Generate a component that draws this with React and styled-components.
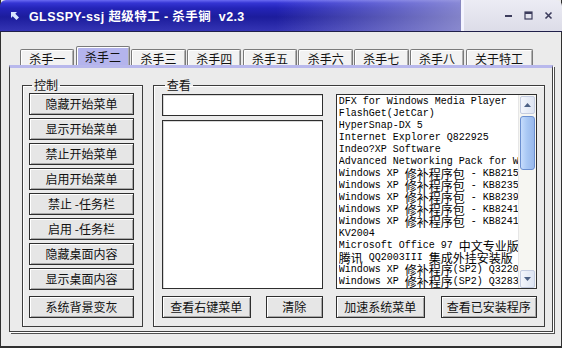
import React from "react";
import styled, { createGlobalStyle } from "styled-components";

const GlobalStyle = createGlobalStyle`
  html, body {
    margin: 0;
    padding: 0;
    background: #ebebeb;
  }
  body {
    font-family: "Noto Sans CJK SC", "Liberation Sans", sans-serif;
    font-size: 12px;
  }
`;

const Window = styled.div`
  width: 562px;
  height: 348px;
  box-sizing: border-box;
  background: #ebebeb;
  border-left: 1px solid #303030;
  border-right: 1px solid #303030;
  border-bottom: 2px solid #303030;
  display: flex;
  flex-direction: column;
`;

const TitleBar = styled.div`
  height: 31px;
  display: flex;
  border-bottom: 1px solid #20204a;
  margin: 0 -1px;
`;

const TitleMain = styled.div`
  width: 460px;
  display: flex;
  align-items: center;
  gap: 8px;
  padding-left: 9px;
  box-sizing: border-box;
  border-top-left-radius: 6px;
  background:
    linear-gradient(to right, rgba(150, 150, 200, 0) 60%, rgba(165, 165, 215, 0.75) 100%),
    linear-gradient(to bottom, #6a6af2 0, #3535d4 3px, #2424b8 8px, #1c1c9c 55%, #3434b4 100%);
`;

const TitleText = styled.span`
  color: #fff;
  font-family: "Liberation Sans", "Noto Sans CJK SC", sans-serif;
  font-weight: bold;
  font-size: 12.5px;
  letter-spacing: 0.4px;
  white-space: pre;
`;

const TitleSep = styled.div`
  width: 3px;
  background: #f4f4ff;
  border-left: 1px solid #8888c0;
`;

const Controls = styled.div`
  flex: 1;
  display: flex;
  align-items: center;
  justify-content: flex-end;
  gap: 9px;
  padding-right: 8px;
  border-top-right-radius: 6px;
  background: linear-gradient(to bottom, #ececf4, #dcdce8);
`;

const CtlBtn = styled.div`
  width: 11px;
  height: 11px;
  display: flex;
  align-items: center;
  justify-content: center;
`;

const Body = styled.div`
  flex: 1;
  display: flex;
  flex-direction: column;
  padding: 0 8px 0 8px;
`;

const TabStrip = styled.div`
  display: flex;
  align-items: flex-end;
  gap: 1.3px;
  height: 19px;
  margin-top: 14px;
  padding-left: 11px;
`;

const Tab = styled.div`
  width: ${(p) => (p.wide ? "67px" : "54.4px")};
  height: ${(p) => (p.active ? "19px" : "16px")};
  box-sizing: border-box;
  display: flex;
  align-items: center;
  justify-content: center;
  font-size: 12px;
  line-height: 12px;
  color: #111;
  background: ${(p) => (p.active ? "#b4b4ec" : "#f2f2f2")};
  border: 1px solid #7a7a7a;
  border-bottom: none;
  border-top-left-radius: 2px;
  border-top-right-radius: 2px;
  box-shadow: inset 1px 1px #fff, inset -1px 0 #b0b0b0;
  padding-top: ${(p) => (p.active ? "1px" : "2px")};
`;

const Panel = styled.div`
  height: 267px;
  box-sizing: border-box;
  border: 1px solid #404040;
  border-top: 3px solid #b8b8ec;
  box-shadow: 1px 1px 0 #fff, 2px 2px 0 #505050;
  display: flex;
  gap: 10px;
  padding: 11px 7px 0 12px;
`;

const Group = styled.fieldset`
  margin: 0;
  min-width: 0;
  height: 248px;
  box-sizing: border-box;
  border: 1px solid #3c3c3c;
  box-shadow: inset 1px 1px #fff;
  width: ${(p) => p.w}px;
  padding: 2px ${(p) => p.pr}px 0 ${(p) => p.pl}px;
`;

const Legend = styled.legend`
  padding: 0 2px;
  margin-left: 3px;
  font-size: 12px;
  line-height: 12px;
  color: #111;
`;

const ButtonStack = styled.div`
  display: flex;
  flex-direction: column;
  gap: 3px;
`;

const Button = styled.div`
  width: ${(p) => p.w || 105}px;
  height: 22px;
  margin-top: ${(p) => (p.spaced ? "3px" : "0")};
  box-sizing: border-box;
  display: flex;
  align-items: center;
  justify-content: center;
  background: #e6e6e6;
  border: 1px solid #2e2e2e;
  box-shadow: inset 1px 1px #fff, inset -1px -1px #a8a8a8;
  font-size: 12px;
  line-height: 12px;
  color: #111;
  white-space: pre;
`;

const ViewGrid = styled.div`
  display: grid;
  grid-template-columns: 161px 201px;
  grid-template-rows: 195px 22px;
  column-gap: 13px;
  row-gap: 7px;
  margin-top: 1px;
`;

const LeftCol = styled.div`
  display: flex;
  flex-direction: column;
  gap: 4px;
`;

const Field = styled.div`
  height: ${(p) => p.h}px;
  box-sizing: border-box;
  background: #fff;
  border: 1px solid #2e2e2e;
  box-shadow: inset 1px 1px #d8d8d8;
`;

const ListBox = styled.div`
  display: flex;
  background: #fff;
  border: 1px solid #2e2e2e;
  overflow: hidden;
`;

const Lines = styled.div`
  flex: 1;
  min-width: 0;
  padding: 1px 0 0 2px;
  overflow: hidden;
`;

const Line = styled.div`
  height: 12px;
  display: flex;
  align-items: center;
  white-space: pre;
  overflow: hidden;
  font-family: "Liberation Mono", monospace;
  font-size: 10px;
  color: #000;
`;

const Cjk = styled.span`
  font-family: "Noto Sans CJK SC", sans-serif;
  font-size: 12px;
  line-height: 12px;
  flex-shrink: 0;
`;

const Latin = styled.span`
  line-height: 12px;
  flex-shrink: 0;
`;

const ScrollBar = styled.div`
  width: 17px;
  flex-shrink: 0;
  display: flex;
  flex-direction: column;
  gap: 1px;
  background: #f6f6f2;
  border-left: 1px solid #e6e6e6;
`;

const Arrow = styled.div`
  height: 16px;
  margin: 1px 1px 0 1px;
  display: flex;
  align-items: center;
  justify-content: center;
  background: linear-gradient(to right, #f4f6fc, #dde4f2);
  border: 1px solid #c4cce0;
  border-radius: 2px;
`;

const Thumb = styled.div`
  height: 52px;
  margin: 1px 1px 0 1px;
  border-radius: 3px;
  border: 1px solid #6b8fd0;
  background: linear-gradient(to right, #c6dcfc, #a9c8f4 45%, #98b8ec);
`;

const Track = styled.div`
  flex: 1;
`;

const ButtonRow = styled.div`
  display: flex;
  justify-content: space-between;
`;

const tabs = ["杀手一", "杀手二", "杀手三", "杀手四", "杀手五", "杀手六", "杀手七", "杀手八", "关于特工"];

const controls = [
  "隐藏开始菜单",
  "显示开始菜单",
  "禁止开始菜单",
  "启用开始菜单",
  "禁止 -任务栏",
  "启用 -任务栏",
  "隐藏桌面内容",
  "显示桌面内容",
];

const programs = [
  "DFX for Windows Media Player",
  "FlashGet(JetCar)",
  "HyperSnap-DX 5",
  "Internet Explorer Q822925",
  "Indeo?XP Software",
  "Advanced Networking Pack for Windows XP",
  "Windows XP 修补程序包 - KB821557",
  "Windows XP 修补程序包 - KB823559",
  "Windows XP 修补程序包 - KB823980",
  "Windows XP 修补程序包 - KB824105",
  "Windows XP 修补程序包 - KB824141",
  "KV2004",
  "Microsoft Office 97 中文专业版",
  "腾讯 QQ2003III 集成外挂安装版",
  "Windows XP 修补程序(SP2) Q322011",
  "Windows XP 修补程序(SP2) Q328310",
];

// split a line so CJK runs get the wider font
function renderLine(text) {
  return text
    .split(/([\u4e00-\u9fff]+)/)
    .filter(Boolean)
    .map((part, i) =>
      /[\u4e00-\u9fff]/.test(part) ? <Cjk key={i}>{part}</Cjk> : <Latin key={i}>{part}</Latin>
    );
}

function App() {
  return (
    <>
      <GlobalStyle />
      <Window>
        <TitleBar>
          <TitleMain>
            <svg width="12" height="12" viewBox="0 0 12 12">
              <path d="M2 2 L8 2 L6.3 3.7 L10 7.4 L7.4 10 L3.7 6.3 L2 8 Z" fill="#d8e4ff" />
            </svg>
            <TitleText>GLSSPY-ssj 超级特工 - 杀手锏  v2.3</TitleText>
          </TitleMain>
          <TitleSep />
          <Controls>
            <CtlBtn>
              <svg width="9" height="9" viewBox="0 0 9 9">
                <rect x="1" y="4" width="7" height="2" fill="#3c3c5c" />
              </svg>
            </CtlBtn>
            <CtlBtn>
              <svg width="9" height="9" viewBox="0 0 9 9">
                <rect x="1" y="1" width="7" height="7" fill="none" stroke="#3c3c5c" strokeWidth="1.2" />
                <rect x="1" y="1" width="7" height="2" fill="#3c3c5c" />
              </svg>
            </CtlBtn>
            <CtlBtn>
              <svg width="9" height="9" viewBox="0 0 9 9">
                <path d="M1.5 1.5 L7.5 7.5 M7.5 1.5 L1.5 7.5" stroke="#3c3c5c" strokeWidth="1.6" />
              </svg>
            </CtlBtn>
          </Controls>
        </TitleBar>
        <Body>
          <TabStrip>
            {tabs.map((t, i) => (
              <Tab key={t} active={i === 1} wide={i === 8}>
                {t}
              </Tab>
            ))}
          </TabStrip>
          <Panel>
            <Group w={121} pl={6} pr={8}>
              <Legend>控制</Legend>
              <ButtonStack>
                {controls.map((c) => (
                  <Button key={c}>{c}</Button>
                ))}
                <Button spaced>系统背景变灰</Button>
              </ButtonStack>
            </Group>
            <Group w={393} pl={8} pr={9}>
              <Legend>查看</Legend>
              <ViewGrid>
                <LeftCol>
                  <Field h={22} />
                  <Field h={170} />
                </LeftCol>
                <ListBox>
                  <Lines>
                    {programs.map((p, i) => (
                      <Line key={i}>{renderLine(p)}</Line>
                    ))}
                  </Lines>
                  <ScrollBar>
                    <Arrow>
                      <svg width="7" height="4" viewBox="0 0 7 4">
                        <path d="M0 4 L3.5 0 L7 4 Z" fill="#4d6185" />
                      </svg>
                    </Arrow>
                    <Thumb />
                    <Track />
                    <Arrow>
                      <svg width="7" height="4" viewBox="0 0 7 4">
                        <path d="M0 0 L3.5 4 L7 0 Z" fill="#4d6185" />
                      </svg>
                    </Arrow>
                  </ScrollBar>
                </ListBox>
                <ButtonRow>
                  <Button w={89}>查看右键菜单</Button>
                  <Button w={57}>清除</Button>
                </ButtonRow>
                <ButtonRow>
                  <Button w={89}>加速系统菜单</Button>
                  <Button w={96}>查看已安装程序</Button>
                </ButtonRow>
              </ViewGrid>
            </Group>
          </Panel>
        </Body>
      </Window>
    </>
  );
}

export default App;
